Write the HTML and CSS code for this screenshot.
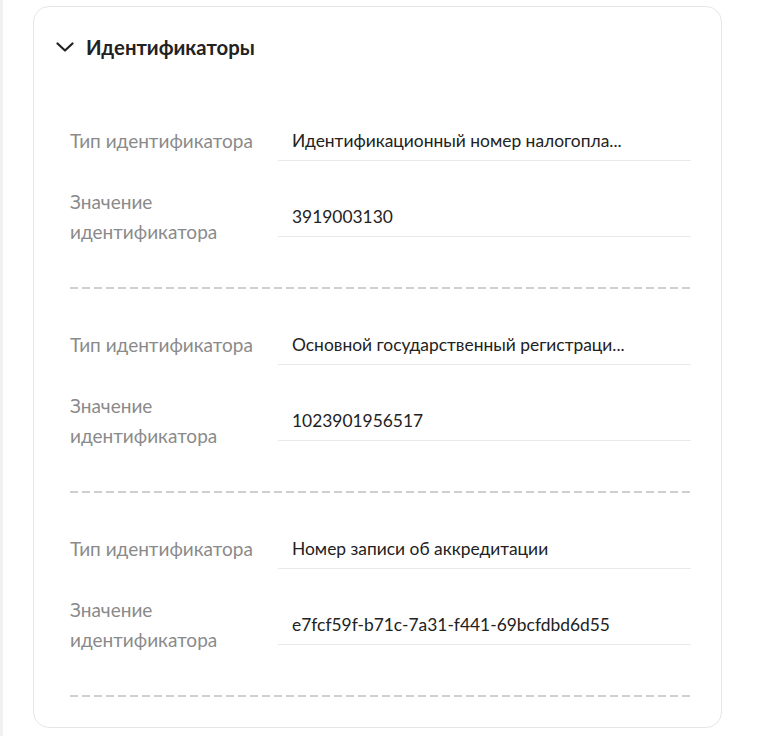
FILE: index.html
```html
<!DOCTYPE html>
<html lang="ru">
<head>
  <meta charset="UTF-8" />
  <meta name="viewport" content="width=device-width, initial-scale=1.0"/>
  <title>Идентификаторы</title>
  <link rel="stylesheet" href="styles.css">
</head>
<body>
  <div class="page">
    <section class="card">
      <header class="card-head">
        <svg class="chevron" width="18" height="10" viewBox="0 0 18 10">
          <path d="M1.5 1.5 L9 8.5 L16.5 1.5" fill="none" stroke="#222" stroke-width="2.2" stroke-linecap="round" stroke-linejoin="round"/>
        </svg>
        <h2>Идентификаторы</h2>
      </header>

      <div class="card-body">
        <div class="group">
          <div class="row">
            <div class="label">Тип идентификатора</div>
            <div class="field"><span class="value">Идентификационный номер налогопла...</span></div>
          </div>
          <div class="row">
            <div class="label">Значение идентификатора</div>
            <div class="field"><span class="value">3919003130</span></div>
          </div>
        </div>

        <div class="group">
          <div class="row">
            <div class="label">Тип идентификатора</div>
            <div class="field"><span class="value">Основной государственный регистраци...</span></div>
          </div>
          <div class="row">
            <div class="label">Значение идентификатора</div>
            <div class="field"><span class="value">1023901956517</span></div>
          </div>
        </div>

        <div class="group">
          <div class="row">
            <div class="label">Тип идентификатора</div>
            <div class="field"><span class="value">Номер записи об аккредитации</span></div>
          </div>
          <div class="row">
            <div class="label">Значение идентификатора</div>
            <div class="field"><span class="value">e7fcf59f-b71c-7a31-f441-69bcfdbd6d55</span></div>
          </div>
        </div>
      </div>
    </section>
  </div>
</body>
</html>
```

FILE: styles.css
```css
body {
  margin: 0;
  font-family: Lato, 'Noto Sans', sans-serif;
  background: #fff;
  color: #222;
}
.page {
  border-left: 3px solid #f1f1f1;
  padding: 6px 0 0 30px;
  min-height: 730px;
}
.card {
  width: 687px;
  border: 1px solid #e6e6e6;
  border-radius: 16px;
  background: #fff;
  padding-bottom: 30px;
}
.card-head {
  display: flex;
  align-items: center;
  gap: 12px;
  padding: 28px 22px 0;
  height: 24px;
}
.chevron {
  flex: none;
}
.card-head h2 {
  margin: 0;
  font-size: 20.3px;
  line-height: 24px;
  font-weight: 700;
  color: #222;
}
.card-body {
  padding: 26px 30px 0 36px;
}
.group {
  display: flex;
  flex-direction: column;
  gap: 26px;
  padding: 36px 0 42px;
  background: repeating-linear-gradient(to right, #cfcfcf 0 8px, transparent 8px 12px) bottom left / 100% 2px no-repeat;
}
.row {
  display: flex;
  align-items: center;
}
.label {
  width: 208px;
  flex: none;
  font-size: 19px;
  line-height: 30px;
  color: #8a8a8a;
}
.field {
  flex: 1;
  min-width: 0;
  height: 40px;
  display: flex;
  align-items: center;
  padding-left: 14px;
  border-bottom: 1px solid #e9e9e9;
  box-sizing: border-box;
}
.value {
  white-space: nowrap;
  font-size: 17.4px;
  line-height: 24px;
  color: #222;
}
```
